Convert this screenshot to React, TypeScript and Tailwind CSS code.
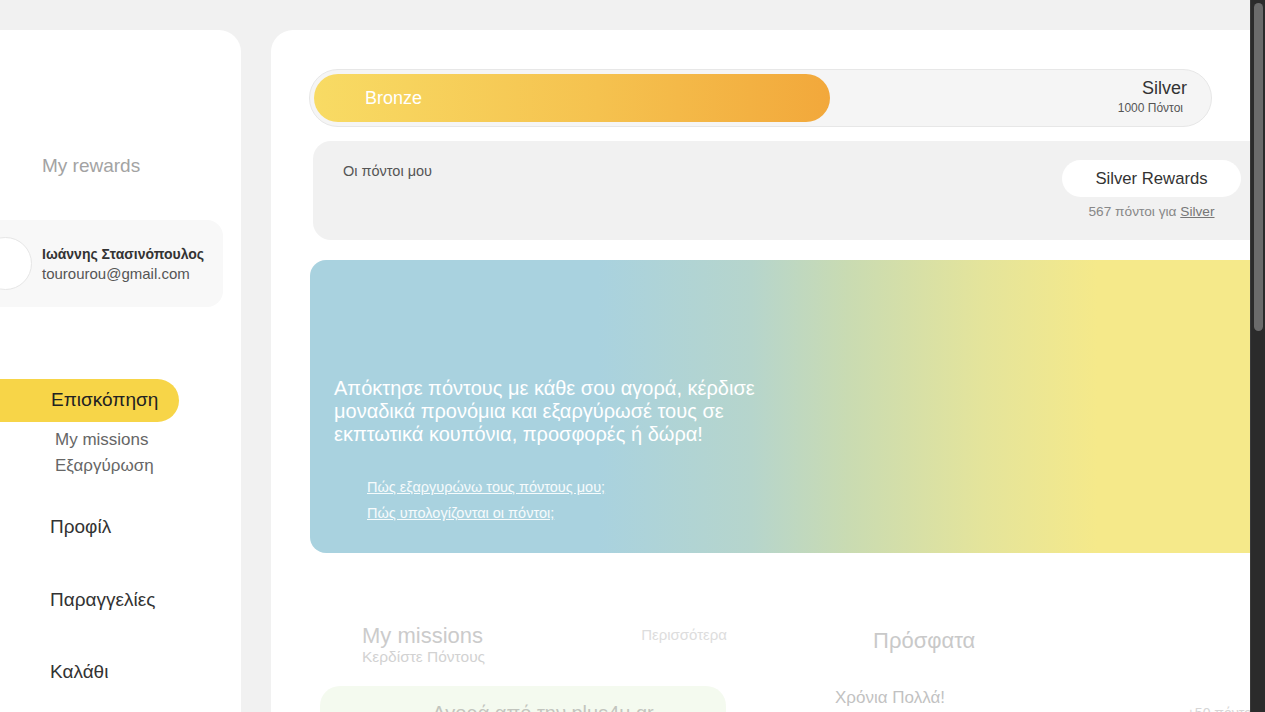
const font = { fontFamily: '"Liberation Sans", Arial, sans-serif' };

const Sidebar = () => {
  return (
    <aside className="w-[241px] shrink-0 bg-white rounded-tr-[22px] pt-[125px]">
      <p className="pl-[42px] text-[19px] leading-[22px] text-[#a3a3a3]">My rewards</p>

      <div className="mt-[43px] ml-[-38px] w-[261px] h-[87px] bg-[#f8f8f8] rounded-[16px] flex items-center gap-[10px] pl-[17px]">
        <div className="w-[53px] h-[53px] rounded-full bg-white border border-[#e6e6e6] shrink-0" />
        <div className="flex flex-col">
          <span className="text-[14px] leading-[20px] font-bold text-[#333]">Ιωάννης Στασινόπουλος</span>
          <span className="text-[15px] leading-[20px] text-[#555]">tourourou@gmail.com</span>
        </div>
      </div>

      <nav className="mt-[72px] flex flex-col">
        <div className="ml-[-30px] w-[209px] h-[43px] rounded-full bg-[#f7d548] flex items-center pl-[81px] text-[19px] text-[#222]">
          Επισκόπηση
        </div>
        <div className="pl-[55px] pt-[5px] flex flex-col text-[17px] leading-[26px] text-[#666]">
          <span>My missions</span>
          <span>Εξαργύρωση</span>
        </div>
        <span className="pl-[50px] mt-[37px] text-[19px] leading-[22px] text-[#333]">Προφίλ</span>
        <span className="pl-[50px] mt-[51px] text-[19px] leading-[22px] text-[#333]">Παραγγελίες</span>
        <span className="pl-[50px] mt-[50px] text-[19px] leading-[22px] text-[#333]">Καλάθι</span>
      </nav>
    </aside>
  );
};

const Main = () => {
  return (
    <main className="w-[1010px] shrink-0 bg-white rounded-tl-[22px] pl-[38px] pt-[39px]">
      {/* tier progress */}
      <div className="w-[903px] h-[58px] rounded-full bg-[#f5f5f5] border border-[#e7e7e7] p-[4px] flex items-center justify-between pr-[24px]">
        <div className="w-[516px] h-[48px] rounded-full bg-[linear-gradient(90deg,#f8db64,#f5c24f_55%,#f2a83b)] flex items-center pl-[51px] text-[18px] text-white">
          Bronze
        </div>
        <div className="flex flex-col items-end mb-[4px]">
          <span className="text-[18px] leading-[22px] text-[#333]">Silver</span>
          <span className="text-[12px] leading-[14px] text-[#555] mr-[4px] mt-[2px]">1000 Πόντοι</span>
        </div>
      </div>

      {/* points */}
      <div className="ml-[4px] mt-[14px] w-[960px] h-[99px] rounded-[18px] bg-[#f1f1f1] flex justify-between pl-[30px] pr-[32px] pt-[19px]">
        <span className="text-[14.5px] leading-[16px] text-[#555] mt-[3px]">Οι πόντοι μου</span>
        <div className="flex flex-col items-center">
          <div className="w-[179px] h-[37px] rounded-full bg-white flex items-center justify-center text-[16.7px] text-[#333]">
            Silver Rewards
          </div>
          <span className="mt-[7px] text-[13.7px] leading-[16px] text-[#888]">
            567 πόντοι για <span className="underline text-[#777]">Silver</span>
          </span>
        </div>
      </div>

      {/* banner */}
      <div className="ml-[1px] mt-[20px] w-[960px] h-[293px] rounded-[16px] bg-[linear-gradient(90deg,#a9d2df_30%,#b6d5cc_46%,#c9dbb2_56%,#e4e49b_70%,#f5e98a_82%)] pl-[24px] pt-[117px]">
        <p className="text-[20px] leading-[23px] text-white">
          Απόκτησε πόντους με κάθε σου αγορά, κέρδισε
          <br />
          μοναδικά προνόμια και εξαργύρωσέ τους σε
          <br />
          εκπτωτικά κουπόνια, προσφορές ή δώρα!
        </p>
        <div className="pl-[33px] mt-[33px] flex flex-col gap-[9px] text-[14.5px] leading-[17px] text-white/90">
          <span className="underline">Πώς εξαργυρώνω τους πόντους μου;</span>
          <span className="underline">Πώς υπολογίζονται οι πόντοι;</span>
        </div>
      </div>

      {/* missions + recent */}
      <div className="mt-[71px] flex opacity-60">
        <div className="w-[406px] ml-[11px]">
          <div className="flex justify-between pl-[42px]">
            <div className="flex flex-col">
              <span className="text-[22px] leading-[24px] text-[#aaa]">My missions</span>
              <span className="text-[15.5px] leading-[18px] text-[#b5b5b5]">Κερδίστε Πόντους</span>
            </div>
            <span className="text-[15px] leading-[17px] text-[#c8c8c8] mt-[2px] mr-[-1px]">Περισσότερα</span>
          </div>
          <div className="mt-[20px] h-[80px] rounded-[20px] bg-[#eef7e6] flex justify-center pl-[40px] pt-[15px]">
            <span className="text-[20px] leading-[24px] text-[#9aa094]">Αγορά από την plus4u.gr</span>
          </div>
        </div>
        <div className="ml-[109px] flex-1 flex flex-col">
          <span className="pl-[38px] mt-[4px] text-[22px] leading-[26px] text-[#a6a6a6]">Πρόσφατα</span>
          <div className="mt-[34px] flex justify-between w-[420px]">
            <span className="text-[17px] leading-[20px] text-[#999]">Χρόνια Πολλά!</span>
            <span className="mt-[16px] text-[14px] leading-[18px] text-[#bbb]">+50 πόντοι</span>
          </div>
        </div>
      </div>
    </main>
  );
};

const App = () => {
  return (
    <div style={font} className="w-[1265px] h-[712px] flex overflow-hidden bg-[#f1f1f1]">
      <div className="w-[1250px] h-[712px] overflow-hidden flex gap-[30px] pt-[30px]">
        <Sidebar />
        <Main />
      </div>
      <div className="w-[15px] h-[712px] bg-[#2b2b2b] border-l border-[#3a3a3a] pt-[3px] pl-[3px]">
        <div className="w-[9px] h-[328px] rounded-full bg-[#6b6b6b]" />
      </div>
    </div>
  );
};

export default App;
